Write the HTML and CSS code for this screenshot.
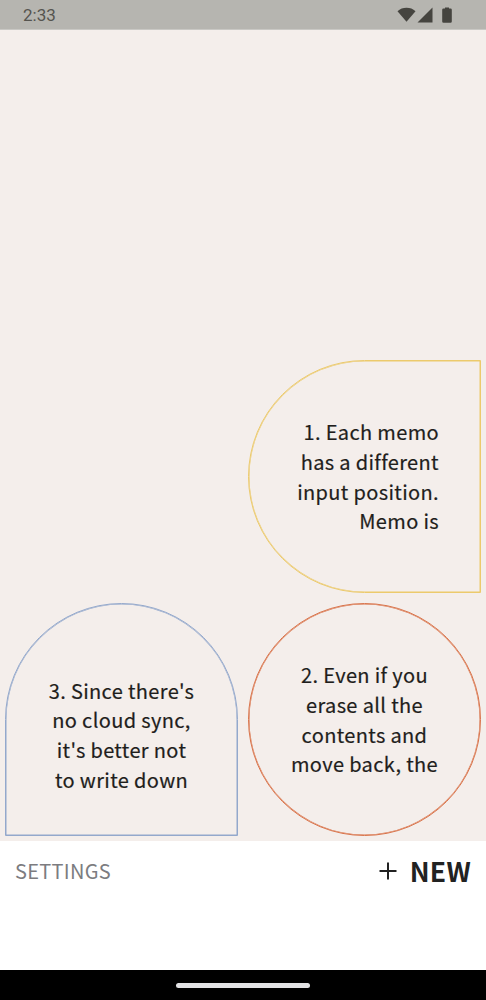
FILE: index.html
```html
<!DOCTYPE html>
<html lang="en">
<head>
    <meta charset="UTF-8">
    <meta name="viewport" content="width=device-width, initial-scale=1.0">
    <title>Memo</title>
    <link rel="stylesheet" href="styles.css">
</head>
<body>
    <div class="status-bar">
        <span class="clock">2:33</span>
        <div class="status-icons">
            <svg class="icon-wifi" width="19" height="15" viewBox="0 0 19 15"><path d="M0.5 4.2C3 1.9 6 0.8 9.5 0.8s6.500 1.100 9 3.400L9.500 14.800z"/></svg>
            <svg class="icon-signal" width="16" height="16" viewBox="0 0 16 16"><path d="M15.500 0.500V15.500H0.500z"/></svg>
            <svg class="icon-battery" width="10" height="16" viewBox="0 0 10 16"><path d="M3 1.500V0.500H7V1.500H8.500Q9.800 1.500 9.800 2.800V14.500Q9.800 15.800 8.500 15.800H1.500Q0.200 15.800 0.200 14.500V2.800Q0.200 1.500 1.500 1.500z"/></svg>
        </div>
    </div>

    <main class="canvas">
        <div class="memo-row row-end">
            <div class="memo memo-left-round">
                <p>1. Each memo<br>has a different<br>input position.<br>Memo is</p>
            </div>
        </div>
        <div class="memo-row">
            <div class="memo memo-arch">
                <p>3. Since there's<br>no cloud sync,<br>it's better not<br>to write down</p>
            </div>
            <div class="memo memo-circle">
                <p>2. Even if you<br>erase all the<br>contents and<br>move back, the</p>
            </div>
        </div>
    </main>

    <footer class="toolbar">
        <span class="settings">SETTINGS</span>
        <div class="new-btn">
            <svg width="18" height="18" viewBox="0 0 18 18"><path d="M9 0.500V17.500M0.500 9H17.500"/></svg>
            <span>NEW</span>
        </div>
    </footer>

    <div class="nav-bar">
        <div class="home-pill"></div>
    </div>
</body>
</html>
```

FILE: styles.css
```css
html, body {
    margin: 0;
    padding: 0;
}

body {
    width: 486px;
    height: 1000px;
    display: flex;
    flex-direction: column;
    overflow: hidden;
    background: #fff;
    font-family: "Noto Sans CJK KR", "Noto Sans", sans-serif;
}

.status-bar {
    height: 29px;
    flex-shrink: 0;
    display: flex;
    align-items: center;
    justify-content: space-between;
    padding: 0 34px 0 23px;
    background: #b6b5b0;
    border-bottom: 1px solid #c9c8c4;
}

.clock {
    font-family: Roboto, sans-serif;
    font-size: 17px;
    color: #55544f;
}

.status-icons {
    display: flex;
    align-items: center;
}

.status-icons svg {
    fill: #45443f;
    display: block;
}

.icon-signal {
    margin-left: 1px;
}

.icon-battery {
    margin-left: 9px;
}

.canvas {
    flex: 1;
    display: flex;
    flex-direction: column;
    justify-content: flex-end;
    gap: 10px;
    padding: 0 5px 5px;
    background: #f4eeeb;
}

.memo-row {
    display: flex;
    justify-content: space-between;
}

.row-end {
    justify-content: flex-end;
}

.memo {
    width: 233px;
    height: 233px;
    box-sizing: border-box;
    display: flex;
    align-items: center;
    justify-content: center;
    border: 1px solid;
    text-align: center;
    font-size: 20px;
    line-height: 29.700px;
    letter-spacing: 0.350px;
    color: #1f1e1c;
    -webkit-text-stroke: 0.200px #1f1e1c;
}

.memo p {
    margin: 0;
}

.memo-left-round {
    border-color: #ecca6c;
    border-radius: 116.500px 0 0 116.500px;
    box-shadow: inset 0 0 0 0.500px #ecca6c;
    justify-content: flex-end;
    padding-right: 41px;
    text-align: right;
}

.memo-arch {
    border-color: #93a8cc;
    border-radius: 116.500px 116.500px 0 0;
    box-shadow: inset 0 0 0 0.500px #93a8cc;
    padding-top: 31px;
}

.memo-circle {
    border-color: #d9734a;
    border-radius: 50%;
    box-shadow: inset 0 0 0 0.500px #d9734a;
}

.toolbar {
    height: 129px;
    flex-shrink: 0;
    display: flex;
    align-items: flex-start;
    justify-content: space-between;
    padding: 14px 15px 0;
    box-sizing: border-box;
    background: #fff;
}

.settings {
    font-size: 20px;
    line-height: 32px;
    letter-spacing: 0.300px;
    color: #7c7c80;
}

.new-btn {
    display: flex;
    align-items: center;
    gap: 13px;
    font-size: 26.500px;
    line-height: 32px;
    font-weight: 700;
    letter-spacing: 0.300px;
    color: #222;
}

.new-btn svg {
    stroke: #222;
    stroke-width: 2;
    fill: none;
    display: block;
}

.nav-bar {
    height: 30px;
    flex-shrink: 0;
    display: flex;
    align-items: center;
    justify-content: center;
    background: #000;
}

.home-pill {
    width: 134px;
    height: 5px;
    border-radius: 3px;
    background: #e2e2e4;
}
```
